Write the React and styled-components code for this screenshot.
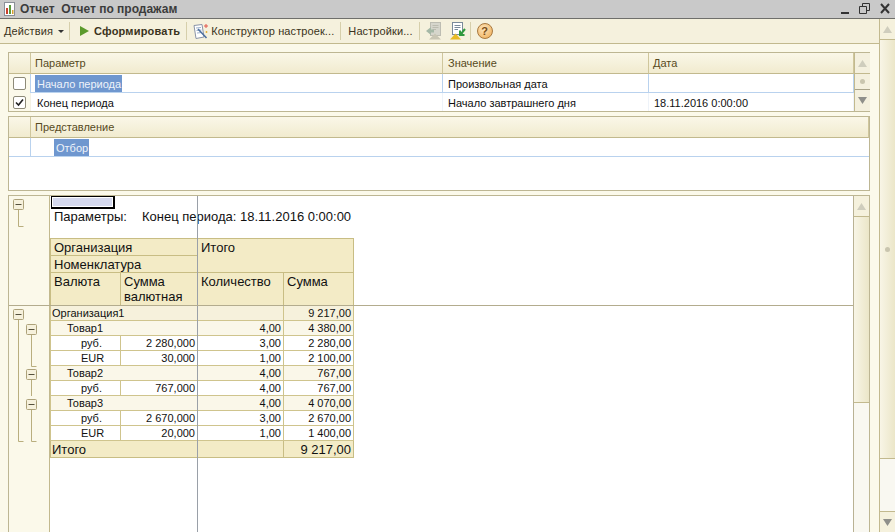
import styled, { createGlobalStyle } from "styled-components"

const Global = createGlobalStyle`
    html, body { margin: 0; padding: 0; background: #fbf9ea; overflow: hidden; }
    #root { width: 895px; height: 532px; }
    * { box-sizing: border-box; }
`

const params = [
    { name: "Начало периода", value: "Произвольная дата", date: "", checked: false, selected: true },
    { name: "Конец периода", value: "Начало завтрашнего дня", date: "18.11.2016 0:00:00", checked: true, selected: false },
]

const rows = [
    { kind: "org", a: "Организация1", qty: "", sum: "9 217,00" },
    { kind: "item", a: "Товар1", qty: "4,00", sum: "4 380,00" },
    { kind: "cur", a: "руб.", b: "2 280,000", qty: "3,00", sum: "2 280,00" },
    { kind: "cur", a: "EUR", b: "30,000", qty: "1,00", sum: "2 100,00" },
    { kind: "item", a: "Товар2", qty: "4,00", sum: "767,00" },
    { kind: "cur", a: "руб.", b: "767,000", qty: "4,00", sum: "767,00" },
    { kind: "item", a: "Товар3", qty: "4,00", sum: "4 070,00" },
    { kind: "cur", a: "руб.", b: "2 670,000", qty: "3,00", sum: "2 670,00" },
    { kind: "cur", a: "EUR", b: "20,000", qty: "1,00", sum: "1 400,00" },
]

function ReportIcon() {
    return (
        <svg width="13" height="14" viewBox="0 0 13 14">
            <rect x="1.5" y="0.5" width="10" height="13" fill="#fff" stroke="#8b8f98" />
            <rect x="3" y="6" width="2" height="6" fill="#c8402c" />
            <rect x="6" y="3" width="2" height="9" fill="#5a9a3c" />
            <rect x="9" y="8" width="1.5" height="4" fill="#d8a030" />
        </svg>
    )
}

function WindowButtons() {
    return (
        <svg width="50" height="12" viewBox="0 0 50 12">
            <rect x="1" y="9" width="8" height="2" fill="#333" />
            <path d="M22.5 3.5V0.5H29.5V7.5H26.5M19.5 3.5H26.5V10.5H19.5Z" fill="none" stroke="#333" />
            <path d="M41 1L49 10M49 1L41 10" stroke="#333" strokeWidth="2" />
        </svg>
    )
}

function WandIcon() {
    return (
        <svg width="16" height="17" viewBox="0 0 16 17">
            <path d="M1 2.5L9 1.5L11 14L3 15.5Z" fill="#fff" stroke="#8a94a8" />
            <path d="M3 5L8 4.5M3.5 7.5L8.5 7M4 10L9 9.5" stroke="#9db1cc" />
            <path d="M5 6L13.5 15" stroke="#4d6f9f" strokeWidth="1.6" />
            <path d="M13 1V5M11 3H15" stroke="#e2574c" />
            <path d="M13.5 8V10M12.5 9H14.5" stroke="#e6b13c" />
        </svg>
    )
}

function DisabledLoadIcon() {
    return (
        <svg width="16" height="18" viewBox="0 0 16 18">
            <rect x="4.5" y="0.5" width="10" height="13" fill="#d6d6cc" stroke="#bdbdb2" />
            <path d="M6.5 3.5H12.5M6.5 5.5H12.5M6.5 7.5H10" stroke="#bcbcb0" />
            <path d="M3 17.5L9 11.5L15 17.5Z" fill="#c9c6b4" />
            <path d="M0 9L5 5V7.5H8V10.5H5V13Z" fill="#a5b8a6" />
        </svg>
    )
}

function ActiveLoadIcon() {
    return (
        <svg width="16" height="18" viewBox="0 0 16 18">
            <rect x="2.5" y="0.5" width="10" height="12" fill="#fff" stroke="#7a8a9a" />
            <path d="M4.5 3.5H10.5M4.5 5.5H10.5M4.5 7.5H8" stroke="#7a8a9a" />
            <path d="M0 17.5L5.5 11.5L11 17.5Z" fill="#e8bb25" />
            <path d="M15 7L10.5 12.5M10 8.5V13H14.5" fill="none" stroke="#2f9a3e" strokeWidth="2" />
        </svg>
    )
}

function GroupMark({ x, y, end, hook }) {
    const cx = x + 5.5
    return (
        <g stroke="#b9ae7e" fill="none">
            <path d={`M${cx} ${y + 10}V${end}${hook ? `H${cx + 5}` : ""}`} />
            <rect x={x + 0.5} y={y + 0.5} width="10" height="10" rx="1" fill="#f6f1dc" stroke="#ada27a" />
            <path d={`M${x + 2.5} ${y + 5.5}H${x + 8.5}`} stroke="#55503c" />
        </g>
    )
}

function TreeLines() {
    return (
        <svg width="41" height="337" viewBox="8 195 41 337">
            <GroupMark x={12} y={198} end={225.5} hook />
            <GroupMark x={12} y={308} end={440.5} hook />
            <GroupMark x={25} y={323} end={365.5} hook />
            <GroupMark x={25} y={368} end={395} />
            <GroupMark x={25} y={398} end={440.5} hook />
        </svg>
    )
}

function ScrollButton({ down, dim }) {
    const fill = dim ? "#cfcdbd" : "#8f8f8a"
    return (
        <svg width="9" height="9" viewBox="0 0 9 9">
            <path d={down ? "M0 1H9L4.5 8Z" : "M0 8H9L4.5 1Z"} fill={fill} />
        </svg>
    )
}

function CheckMark() {
    return (
        <svg width="9" height="9" viewBox="0 0 9 9">
            <path d="M1 4.5L3.5 7L8 1.5" fill="none" stroke="#222" strokeWidth="1.6" />
        </svg>
    )
}

function ParamTable() {
    return (
        <Panel>
            <ParamGrid>
                <HeadCell />
                <HeadCell>Параметр</HeadCell>
                <HeadCell $pl={5}>Значение</HeadCell>
                <HeadCell>Дата</HeadCell>
                {params.map((p, i) => {
                    const last = i === params.length - 1
                    return (
                        <ParamRow key={p.name}>
                            <CheckCell $last={last}>
                                <CheckBox>{p.checked && <CheckMark />}</CheckBox>
                            </CheckCell>
                            <BodyCell $last={last} $pl={4}>
                                <CellText $selected={p.selected}>{p.name}</CellText>
                            </BodyCell>
                            <BodyCell $last={last} $pl={3}>
                                <CellText>{p.value}</CellText>
                            </BodyCell>
                            <BodyCell $last={last} $pl={3}>
                                <CellText>{p.date}</CellText>
                            </BodyCell>
                        </ParamRow>
                    )
                })}
            </ParamGrid>
            <PanelScroll>
                <PanelScrollBtn $h={21}><ScrollButton dim /></PanelScrollBtn>
                <PanelScrollTrack><Knob /></PanelScrollTrack>
                <PanelScrollBtn $h={21} $last><ScrollButton down /></PanelScrollBtn>
            </PanelScroll>
        </Panel>
    )
}

function FilterTable() {
    return (
        <FilterPanel>
            <FilterHead>
                <HeadCell />
                <HeadCell>Представление</HeadCell>
            </FilterHead>
            <FilterRow>
                <FilterMark />
                <FilterCell>
                    <CellText $selected>Отбор</CellText>
                </FilterCell>
            </FilterRow>
        </FilterPanel>
    )
}

function Report() {
    return (
        <ReportPanel>
            <Gutter>
                <TreeLines />
            </Gutter>
            <Sheet>
                <SelectedCell />
                <ParamsLine>
                    <ParamsLabel>Параметры:</ParamsLabel>
                    <span>Конец периода: 18.11.2016 0:00:00</span>
                </ParamsLine>
                <ReportTable>
                    <colgroup>
                        <col width="70" />
                        <col width="77" />
                        <col width="86" />
                        <col width="70" />
                    </colgroup>
                    <thead>
                        <tr>
                            <TopHead colSpan={2} $h={17}>Организация</TopHead>
                            <TopHead colSpan={2} rowSpan={2}>Итого</TopHead>
                        </tr>
                        <tr>
                            <TopHead colSpan={2} $h={17}>Номенклатура</TopHead>
                        </tr>
                        <tr>
                            <TopHead $h={33}>Валюта</TopHead>
                            <TopHead>Сумма валютная</TopHead>
                            <TopHead>Количество</TopHead>
                            <TopHead>Сумма</TopHead>
                        </tr>
                    </thead>
                    <tbody>
                        {rows.map((r, i) => (
                            <DataRow key={i} $kind={r.kind}>
                                {r.kind === "cur" ? (
                                    <>
                                        <CurrencyCell>{r.a}</CurrencyCell>
                                        <NumCell>{r.b}</NumCell>
                                    </>
                                ) : (
                                    <GroupCell colSpan={2} $kind={r.kind}>{r.a}</GroupCell>
                                )}
                                <NumCell>{r.qty}</NumCell>
                                <NumCell>{r.sum}</NumCell>
                            </DataRow>
                        ))}
                        <TotalRow>
                            <TotalCell colSpan={2}>Итого</TotalCell>
                            <TotalCell />
                            <TotalCell $right>9 217,00</TotalCell>
                        </TotalRow>
                    </tbody>
                </ReportTable>
            </Sheet>
            <ReportScroll>
                <SideButton $h={21}><ScrollButton dim /></SideButton>
                <SideThumb $h={186} />
                <SideTrack />
            </ReportScroll>
            <FreezeV />
            <FreezeH />
        </ReportPanel>
    )
}

export default function App() {
    return (
        <Page>
            <Global />
            <TitleBar>
                <ReportIcon />
                <Title>Отчет&nbsp; Отчет по продажам</Title>
                <WindowButtons />
            </TitleBar>
            <Body>
                <Main>
                    <Toolbar>
                        <ToolText>Действия</ToolText>
                        <Caret />
                        <Sep $ml={5} />
                        <PlayIcon />
                        <ToolText $bold>Сформировать</ToolText>
                        <Sep $ml={6} />
                        <IconSlot $ml={6}><WandIcon /></IconSlot>
                        <ToolText>Конструктор настроек...</ToolText>
                        <Sep $ml={6} />
                        <ToolText $ml={7}>Настройки...</ToolText>
                        <Sep $ml={6} />
                        <IconSlot $ml={6}><DisabledLoadIcon /></IconSlot>
                        <IconSlot $ml={6}><ActiveLoadIcon /></IconSlot>
                        <Sep $ml={2} />
                        <HelpIcon>?</HelpIcon>
                    </Toolbar>
                    <Panels>
                        <ParamTable />
                        <FilterTable />
                        <Report />
                    </Panels>
                </Main>
                <OuterScroll>
                    <SideButton $h={21} $wide><ScrollButton dim /></SideButton>
                    <SideThumb $h={419} $wide><Knob /></SideThumb>
                    <SideTrack $h={52} $wide />
                    <SideButton $h={21} $wide $bottom><ScrollButton down /></SideButton>
                </OuterScroll>
            </Body>
        </Page>
    )
}

const Page = styled.div`
    width: 895px;
    height: 532px;
    display: flex;
    flex-direction: column;
    overflow: hidden;
    background: #fbf9ea;
    font-family: "Liberation Sans", Arial, sans-serif;
    font-size: 11px;
    color: #101010;
`

const TitleBar = styled.div`
    height: 19px;
    flex: none;
    display: flex;
    align-items: center;
    padding: 0 5px 0 3px;
    background: #c9c9c9;
    border-bottom: 1px solid #6f6f6b;
`

const Title = styled.div`
    flex: 1;
    margin-left: 4px;
    font-size: 12px;
    font-weight: bold;
    color: #3c3c3c;
`

const Body = styled.div`
    flex: 1;
    display: flex;
    min-height: 0;
`

const Main = styled.div`
    flex: 1;
    min-width: 0;
    display: flex;
    flex-direction: column;
`

const Toolbar = styled.div`
    height: 25px;
    flex: none;
    display: flex;
    align-items: center;
    padding-left: 4px;
    background: #f5f1dd;
    border-bottom: 1px solid #c2b98e;
`

const ToolText = styled.span`
    margin-left: ${(p) => p.$ml || 0}px;
    font-weight: ${(p) => (p.$bold ? "bold" : "normal")};
    letter-spacing: ${(p) => (p.$bold ? 0.2 : 0.1)}px;
    color: #3a3320;
    white-space: nowrap;
`

const Caret = styled.span`
    margin-left: 5px;
    border-left: 3px solid transparent;
    border-right: 3px solid transparent;
    border-top: 3px solid #333;
`

const Sep = styled.span`
    width: 1px;
    height: 18px;
    margin-left: ${(p) => p.$ml || 0}px;
    background: #d6cfab;
`

const PlayIcon = styled.span`
    margin: 0 5px 0 10px;
    border-left: 9px solid #5b9a2c;
    border-top: 5px solid transparent;
    border-bottom: 5px solid transparent;
`

const IconSlot = styled.span`
    display: flex;
    margin-left: ${(p) => p.$ml || 0}px;
    margin-right: 2px;
`

const HelpIcon = styled.span`
    width: 16px;
    height: 16px;
    margin-left: 6px;
    display: flex;
    align-items: center;
    justify-content: center;
    border-radius: 50%;
    border: 1px solid #a8793f;
    background: radial-gradient(circle at 40% 35%, #fde6bd, #eea94f);
    color: #7a4c14;
    font-size: 11px;
    font-weight: bold;
`

const Panels = styled.div`
    flex: 1;
    min-height: 0;
    display: flex;
    flex-direction: column;
    padding: 8px 9px 0 8px;
`

const Panel = styled.div`
    height: 60px;
    flex: none;
    display: flex;
    border: 1px solid #bdb693;
    background: #fff;
`

const ParamGrid = styled.div`
    flex: 1;
    display: grid;
    grid-template-columns: 22px 412px 206px 205px;
    grid-template-rows: 21px 19px 18px;
`

const ParamRow = styled.div`
    display: contents;
`

const HeadCell = styled.div`
    display: flex;
    align-items: center;
    padding-left: ${(p) => p.$pl || 4}px;
    color: #574a22;
    background: linear-gradient(#faf7e8, #f1ebcf);
    border-right: 1px solid #cfc69c;
    border-bottom: 1px solid #c2b98e;
`

const CheckCell = styled.div`
    display: flex;
    align-items: center;
    justify-content: center;
    padding-right: 1px;
    background: #fbf9ea;
    border-right: 1px solid ${(p) => (p.$last ? "#f4f1e4" : "#b9d2ee")};
`

const CheckBox = styled.span`
    width: 13px;
    height: 13px;
    display: flex;
    align-items: center;
    justify-content: center;
    border: 1px solid #8d8a78;
    border-radius: 2px;
    background: #fff;
`

const BodyCell = styled.div`
    display: flex;
    padding-left: ${(p) => p.$pl}px;
    border-right: 1px solid ${(p) => (p.$last ? "#eef3f9" : "#b9d2ee")};
    border-bottom: ${(p) => (p.$last ? "none" : "1px solid #b9d2ee")};
`

const CellText = styled.span`
    display: flex;
    align-items: center;
    height: 17px;
    margin-top: 1px;
    padding: 1px ${(p) => (p.$selected ? 1 : 2)}px 0 2px;
    white-space: nowrap;
    background: ${(p) => (p.$selected ? "#6f97cf" : "transparent")};
    color: ${(p) => (p.$selected ? "#eef3fa" : "#101010")};
`

const PanelScroll = styled.div`
    width: 16px;
    flex: none;
    display: flex;
    flex-direction: column;
    border-left: 1px solid #c2b98e;
    background: #f5f1dd;
`

const PanelScrollBtn = styled.div`
    height: ${(p) => p.$h}px;
    flex: none;
    display: flex;
    align-items: center;
    justify-content: center;
    border-bottom: ${(p) => (p.$last ? "none" : "1px solid #c2b98e")};
    background: #f4f0de;
`

const PanelScrollTrack = styled.div`
    flex: 1;
    display: flex;
    align-items: center;
    justify-content: center;
    border-bottom: 1px solid #a8a288;
    background: #f4f0de;
`

const Knob = styled.span`
    width: 5px;
    height: 5px;
    border-radius: 50%;
    background: #c9c5ae;
`

const FilterPanel = styled.div`
    height: 75px;
    flex: none;
    margin-top: 4px;
    border: 1px solid #bdb693;
    background: #fff;
`

const FilterHead = styled.div`
    height: 21px;
    display: grid;
    grid-template-columns: 22px 1fr;
`

const FilterRow = styled.div`
    height: 19px;
    display: flex;
    border-bottom: 1px solid #b9d2ee;
`

const FilterMark = styled.div`
    width: 22px;
    flex: none;
    border-right: 1px solid #b9d2ee;
`

const FilterCell = styled.div`
    padding-left: 23px;
`

const ReportPanel = styled.div`
    position: relative;
    flex: 1;
    min-height: 0;
    margin-top: 4px;
    display: flex;
    border: 1px solid #bdb693;
    border-bottom: none;
    background: #fff;
`

const Gutter = styled.div`
    width: 41px;
    flex: none;
    background: #fbf9ea;
    border-right: 1px solid #c2b98e;
    svg { display: block; }
`

const Sheet = styled.div`
    flex: 1;
    min-width: 0;
    color: #111;
`

const SelectedCell = styled.div`
    width: 64px;
    height: 13px;
    margin-left: 1px;
    background: #d5d9ee;
    border: 1px solid #000;
    border-right-width: 2px;
    border-bottom-width: 2px;
    box-shadow: inset 0 0 0 1px #fff;
`

const ParamsLine = styled.div`
    height: 29px;
    padding: 0 0 15px 4px;
    display: flex;
    align-items: center;
    font-size: 13px;
    white-space: nowrap;
`

const ParamsLabel = styled.span`
    width: 88px;
`

const ReportTable = styled.table`
    width: 303px;
    table-layout: fixed;
    border-collapse: collapse;
    td, th { padding: 0; }
`

const TopHead = styled.th`
    height: ${(p) => (p.$h ? `${p.$h}px` : "auto")};
    padding: 1px 3px 0 !important;
    vertical-align: top;
    text-align: left;
    font-weight: normal;
    font-size: 13px;
    line-height: 15px;
    background: #f3ebc6;
    border: 1px solid #c8bd84;
`

const DataRow = styled.tr`
    height: 15px;
    background: ${(p) => (p.$kind === "org" ? "#f6f1dc" : p.$kind === "item" ? "#faf7e9" : "#fff")};
`

const NumCell = styled.td`
    height: 15px;
    padding-right: 2px !important;
    text-align: right;
    line-height: 14px;
    border: 1px solid #cfc48d;
`

const GroupCell = styled.td`
    padding-left: ${(p) => (p.$kind === "item" ? 16 : 1)}px !important;
    line-height: 14px;
    border: 1px solid #cfc48d;
`

const CurrencyCell = styled.td`
    padding-left: 30px !important;
    line-height: 14px;
    border: 1px solid #cfc48d;
`

const TotalRow = styled.tr`
    height: 17px;
    background: #f3ebc6;
`

const TotalCell = styled.td`
    height: 17px;
    padding: 0 ${(p) => (p.$right ? 2 : 1)}px !important;
    text-align: ${(p) => (p.$right ? "right" : "left")};
    font-size: 13px;
    line-height: 15px;
    border: 1px solid #c8bd84;
`

const ReportScroll = styled.div`
    width: 16px;
    flex: none;
    display: flex;
    flex-direction: column;
    border-left: 1px solid #b9b294;
`

const OuterScroll = styled.div`
    width: 16px;
    flex: none;
    display: flex;
    flex-direction: column;
    border-left: 1px solid #c2b98e;
`

const SideButton = styled.div`
    height: ${(p) => p.$h}px;
    flex: none;
    margin-top: ${(p) => (p.$bottom ? "auto" : 0)};
    display: flex;
    align-items: center;
    justify-content: center;
    background: #f5f1dd;
    border-bottom: ${(p) => (p.$bottom ? "none" : "1px solid #c2b98e")};
    border-top: ${(p) => (p.$bottom ? "1px solid #c2b98e" : "none")};
`

const SideThumb = styled.div`
    height: ${(p) => p.$h}px;
    flex: none;
    display: flex;
    align-items: center;
    justify-content: center;
    background: linear-gradient(90deg, #f8f5e6, #ebe6c8);
    border-bottom: 1px solid #c2b98e;
`

const SideTrack = styled.div`
    flex: ${(p) => (p.$h ? "none" : 1)};
    height: ${(p) => (p.$h ? `${p.$h}px` : "auto")};
    background: #f9f8f1;
`

const FreezeV = styled.div`
    position: absolute;
    left: 188px;
    top: 0;
    bottom: 0;
    width: 1px;
    background: #9aa0a8;
`

const FreezeH = styled.div`
    position: absolute;
    left: 0;
    right: 16px;
    top: 109px;
    height: 1px;
    background: #b3ac8e;
`
